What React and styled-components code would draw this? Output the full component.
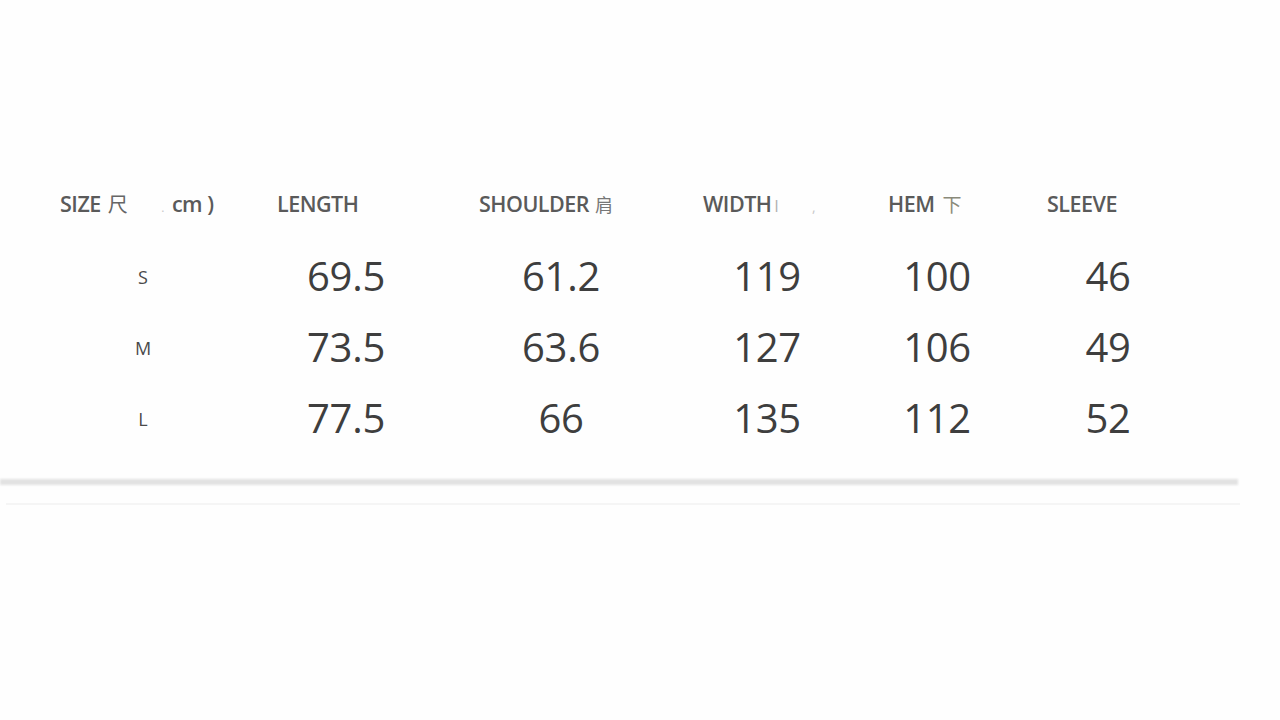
import React from 'react';
import styled, { createGlobalStyle } from 'styled-components';

const Global = createGlobalStyle`
  html, body { margin: 0; padding: 0; background: #fefefe; }
  body { font-family: "Open Sans", "Noto Sans CJK SC", sans-serif; }
`;

const cols = '166px 240px 190px 222px 118px 224px';

const Page = styled.div`
  width: 1280px;
  height: 720px;
  overflow: hidden;
  padding-top: 167px;
  box-sizing: border-box;
`;

const Table = styled.div`
  display: grid;
  grid-template-columns: ${cols};
  grid-template-rows: 72px 72px 71px 71px;
  align-items: center;
  padding-left: 60px;
`;

const Head = styled.div`
  padding-left: ${p => p.offset || 0}px;
  font-size: 21.5px;
  font-weight: 600;
  color: #5a5a5a;
  white-space: nowrap;
  letter-spacing: -0.5px;
`;

const Faint = styled.span`
  color: ${p => p.tone || '#8a8a8a'};
  font-size: ${p => p.size || 19}px;
  font-weight: ${p => (p.bold ? 600 : 400)};
  margin-left: ${p => p.gap || 4}px;
`;

const SizeCell = styled.div`
  text-align: center;
  font-size: 18px;
  color: #4a4a4a;
  padding-top: 3px;
`;

const Value = styled.div`
  text-align: center;
  font-size: 40px;
  color: #3e3e3e;
  letter-spacing: -0.3px;
`;

const Rule = styled.div`
  margin-top: 26px;
  width: 1238px;
  height: 6px;
  background: #e2e2e2;
  filter: blur(1px);
`;

const ThinRule = styled.div`
  margin: 18px 0 0 6px;
  width: 1234px;
  height: 2px;
  background: #f5f5f5;
`;

const rows = [
  ['S', '69.5', '61.2', '119', '100', '46'],
  ['M', '73.5', '63.6', '127', '106', '49'],
  ['L', '77.5', '66', '135', '112', '52'],
];

export default function App() {
  return (
    <Page>
      <Global />
      <Table>
        <Head>
          SIZE<Faint tone="#666" size={20} gap={7}>尺</Faint>
          <Faint tone="#c8c8c8" size={12} gap={34}>.</Faint>
          <Faint tone="#5a5a5a" size={21.5} gap={8} bold>cm )</Faint>
        </Head>
        <Head offset={51}>LENGTH</Head>
        <Head offset={13}>SHOULDER<Faint tone="#777" size={18} gap={6}>肩</Faint></Head>
        <Head offset={47}>WIDTH<Faint tone="#b0b0b0" size={16} gap={3}>l</Faint><Faint tone="#c8c8c8" size={14} gap={34}>,</Faint></Head>
        <Head offset={10}>HEM<Faint tone="#8a8a7a" gap={8}>下</Faint></Head>
        <Head offset={51}>SLEEVE</Head>
        {rows.map(r => (
          <React.Fragment key={r[0]}>
            <SizeCell>{r[0]}</SizeCell>
            {r.slice(1).map((v, i) => <Value key={i}>{v}</Value>)}
          </React.Fragment>
        ))}
      </Table>
      <Rule />
      <ThinRule />
    </Page>
  );
}
